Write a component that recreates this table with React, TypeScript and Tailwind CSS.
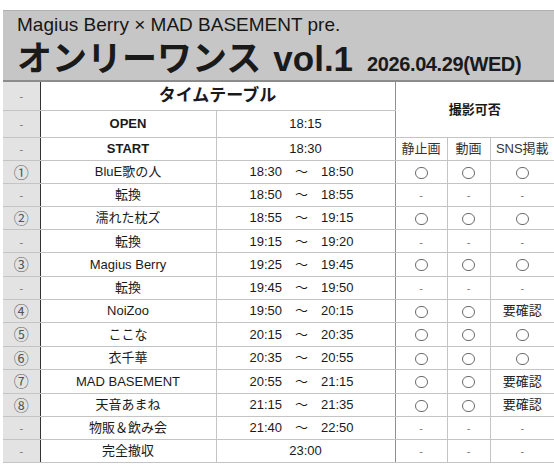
const FONT = { fontFamily: '"Liberation Sans", "Noto Sans CJK JP", sans-serif' };
const CJK = { fontFamily: '"Noto Sans CJK JP", sans-serif' };

type Row = {
  no: string;
  name: string;
  time: string;
  still: string;
  movie: string;
  sns: string;
};

const rows: Row[] = [
  { no: "①", name: "BluE歌の人", time: "18:30　～　18:50", still: "○", movie: "○", sns: "○" },
  { no: "-", name: "転換", time: "18:50　～　18:55", still: "-", movie: "-", sns: "-" },
  { no: "②", name: "濡れた枕ズ", time: "18:55　～　19:15", still: "○", movie: "○", sns: "○" },
  { no: "-", name: "転換", time: "19:15　～　19:20", still: "-", movie: "-", sns: "-" },
  { no: "③", name: "Magius Berry", time: "19:25　～　19:45", still: "○", movie: "○", sns: "○" },
  { no: "-", name: "転換", time: "19:45　～　19:50", still: "-", movie: "-", sns: "-" },
  { no: "④", name: "NoiZoo", time: "19:50　～　20:15", still: "○", movie: "○", sns: "要確認" },
  { no: "⑤", name: "ここな", time: "20:15　～　20:35", still: "○", movie: "○", sns: "○" },
  { no: "⑥", name: "衣千華", time: "20:35　～　20:55", still: "○", movie: "○", sns: "○" },
  { no: "⑦", name: "MAD BASEMENT", time: "20:55　～　21:15", still: "○", movie: "○", sns: "要確認" },
  { no: "⑧", name: "天音あまね", time: "21:15　～　21:35", still: "○", movie: "○", sns: "要確認" },
  { no: "-", name: "物販＆飲み会", time: "21:40　～　22:50", still: "-", movie: "-", sns: "-" },
  { no: "-", name: "完全撤収", time: "23:00", still: "-", movie: "-", sns: "-" },
];

function Mark({ v }: { v: string }) {
  if (v === "-") return <span className="text-[11px] text-[#777]">-</span>;
  if (v === "○")
    return (
      <span className="inline-block align-middle w-[13px] h-[12px] rounded-full border border-[#6a6a6a]" />
    );
  return <span className="text-[13px] text-[#222]">{v}</span>;
}

export default function App() {
  return (
    <div className="w-[554px] h-[466px] bg-white overflow-hidden text-[#1a1a1a]" style={FONT}>
      <div className="mt-[10px] ml-[3px] h-[72px] bg-[#c6c6c6] border-t border-[#b0b0b0] border-b-2 border-b-[#8c8c8c] pl-[14px]">
        <div className="text-[19px] leading-[22px] pt-[3px] text-[#161616]">
          Magius Berry × MAD BASEMENT pre.
        </div>
        <div className="flex items-baseline mt-[2px]">
          <span className="text-[35px] leading-[42px] font-bold">オンリーワンス</span>
          <span className="ml-[12px] text-[35px] leading-[42px] font-bold">vol.1</span>
          <span className="ml-[14px] text-[20px] font-semibold tracking-[-0.4px]">
            2026.04.29(WED)
          </span>
        </div>
      </div>

      <table className="ml-[3px] w-[551px] table-fixed text-[13px] text-center">
        <colgroup>
          <col className="w-[37px]" />
          <col className="w-[176px]" />
          <col className="w-[179px]" />
          <col className="w-[52px]" />
          <col className="w-[43px]" />
          <col />
        </colgroup>
        <tbody>
          <tr className="h-[28px]">
            <td className="bg-[#e3e3e3] border-r border-r-[#333] border-b border-b-[#c4c4c4]">
              <Mark v="-" />
            </td>
            <td colSpan={2} className="text-[17px] font-bold border-b border-b-[#c4c4c4]">
              タイムテーブル
            </td>
            <td colSpan={3} rowSpan={2} className="font-bold border-l border-l-[#8f8f8f] border-b border-b-[#c4c4c4]">
              撮影可否
            </td>
          </tr>
          <tr className="h-[27px]">
            <td className="bg-[#e3e3e3] border-r border-r-[#333] border-b border-b-[#c4c4c4]">
              <Mark v="-" />
            </td>
            <td className="font-bold border-r border-r-[#c4c4c4] border-b border-b-[#c4c4c4]">OPEN</td>
            <td className="border-b border-b-[#c4c4c4]">18:15</td>
          </tr>
          <tr className="h-[23px]">
            <td className="bg-[#e3e3e3] border-r border-r-[#333] border-b border-b-[#c4c4c4]">
              <Mark v="-" />
            </td>
            <td className="font-bold border-r border-r-[#c4c4c4] border-b border-b-[#c4c4c4]">START</td>
            <td className="border-b border-b-[#c4c4c4]">18:30</td>
            <td className="border-l border-l-[#8f8f8f] border-r border-r-[#c4c4c4] border-b border-b-[#c4c4c4] text-[#333]">静止画</td>
            <td className="border-r border-r-[#c4c4c4] border-b border-b-[#c4c4c4] text-[#333]">動画</td>
            <td className="border-b border-b-[#c4c4c4] text-[#333]">SNS掲載</td>
          </tr>
          {rows.map((r, i) => (
            <tr key={i} className="h-[22.85px]">
              <td className="bg-[#e3e3e3] border-r border-r-[#333] border-b border-b-[#c4c4c4] text-[#555]">
                {r.no === "-" ? (
                  <Mark v="-" />
                ) : (
                  <span className="text-[15px]" style={CJK}>
                    {r.no}
                  </span>
                )}
              </td>
              <td className="border-r border-r-[#c4c4c4] border-b border-b-[#c4c4c4]">{r.name}</td>
              <td className={r.time.includes("～") ? "border-b border-b-[#c4c4c4] pr-[8px]" : "border-b border-b-[#c4c4c4]"}>
                {r.time}
              </td>
              <td className="border-l border-l-[#8f8f8f] border-r border-r-[#c4c4c4] border-b border-b-[#c4c4c4]">
                <Mark v={r.still} />
              </td>
              <td className="border-r border-r-[#c4c4c4] border-b border-b-[#c4c4c4]">
                <Mark v={r.movie} />
              </td>
              <td className="border-b border-b-[#c4c4c4]">
                <Mark v={r.sns} />
              </td>
            </tr>
          ))}
        </tbody>
      </table>
    </div>
  );
}
